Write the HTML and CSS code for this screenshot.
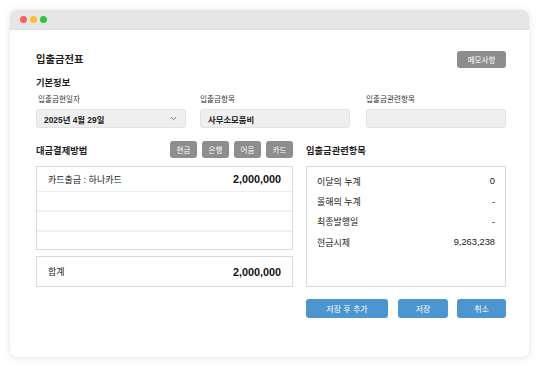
FILE: index.html
```html
<!DOCTYPE html>
<html lang="ko">
<head>
<meta charset="utf-8">
<link rel="stylesheet" href="styles.css">
</head>
<body>
<div class="window">
  <div class="titlebar">
    <span class="dot red"></span><span class="dot yellow"></span><span class="dot green"></span>
  </div>
  <div class="content">
    <div class="head">
      <h1 class="title">입출금전표</h1>
      <button class="btn gray memo">메모사항</button>
    </div>
    <h2 class="section">기본정보</h2>
    <div class="fields">
      <div class="field f1">
        <label class="label">입출금현일자</label>
        <div class="input select"><span>2025년 4월 29일</span>
          <svg class="chev" width="7" height="5" viewBox="0 0 7 5"><path d="M1 1.2 L3.5 3.6 L6 1.2" fill="none" stroke="#666" stroke-width="0.9"/></svg>
        </div>
      </div>
      <div class="field f2">
        <label class="label">입출금항목</label>
        <div class="input"><span>사무소모품비</span></div>
      </div>
      <div class="field f3">
        <label class="label">입출금관련항목</label>
        <div class="input"></div>
      </div>
    </div>
    <div class="lower">
      <div class="left">
        <div class="sub-head">
          <h2 class="section">대금결제방법</h2>
          <div class="paybtns">
            <button class="btn gray small">현금</button>
            <button class="btn gray small">은행</button>
            <button class="btn gray small">어음</button>
            <button class="btn gray small">카드</button>
          </div>
        </div>
        <div class="table">
          <div class="row first"><span>카드출금 : 하나카드</span><b class="num">2,000,000</b></div>
          <div class="row"></div>
          <div class="row"></div>
          <div class="row last"></div>
        </div>
        <div class="sum"><span>합계</span><b class="num">2,000,000</b></div>
      </div>
      <div class="right">
        <div class="sub-head">
          <h2 class="section">입출금관련항목</h2>
        </div>
        <div class="info">
          <div class="irow"><span>이달의 누계</span><span class="num">0</span></div>
          <div class="irow"><span>올해의 누계</span><span class="num">-</span></div>
          <div class="irow"><span>최종발행일</span><span class="num">-</span></div>
          <div class="irow"><span>현금시제</span><span class="num">9,263,238</span></div>
        </div>
        <div class="actions">
          <button class="btn blue wide">저장 후 추가</button>
          <button class="btn blue mid">저장</button>
          <button class="btn blue mid2">취소</button>
        </div>
      </div>
    </div>
  </div>
</div>
</body>
</html>
```

FILE: styles.css
```css
* { box-sizing: border-box; margin: 0; padding: 0; }
html, body { background: #ffffff; }
body {
  font-family: "Liberation Sans", "Noto Sans CJK KR", sans-serif;
  color: #222;
  padding: 10px 11px 0 10px;
  width: 540px;
  height: 368px;
  overflow: hidden;
}
.window {
  width: 519px;
  height: 347px;
  background: #fff;
  border-radius: 7px;
  box-shadow: 0 1px 8px rgba(0,0,0,0.10), 0 0 2px rgba(0,0,0,0.06);
  overflow: hidden;
}
.titlebar {
  height: 20px;
  background: #e6e6e6;
  display: flex;
  align-items: center;
  padding-left: 10px;
  gap: 3px;
  border-bottom: 1px solid #e0e0e0;
}
.dot { width: 7px; height: 7px; border-radius: 50%; display: block; }
.red { background: #fe5f57; }
.yellow { background: #febc2e; }
.green { background: #28c840; }
.content { padding: 21px 23px 0 26px; }
.head {
  display: flex;
  justify-content: space-between;
  align-items: center;
  height: 17px;
}
.title { font-size: 10.3px; font-weight: bold; color: #1e1e1e; margin-top: -2px; }
.btn {
  font-family: "Noto Sans CJK KR", "Liberation Sans", sans-serif;
  border: none;
  color: #fff;
  font-size: 7.5px;
  border-radius: 3px;
  display: flex;
  align-items: center;
  justify-content: center;
}
.gray { background: #8d8d8d; }
.memo { width: 49px; height: 17px; margin-right: 0; }
.section { font-size: 9.3px; font-weight: bold; color: #1e1e1e; }
.content > .section { margin-top: 8px; line-height: 14px; }
.fields { display: flex; margin-top: 5px; }
.field { display: flex; flex-direction: column; }
.f1 { width: 150px; }
.f2 { width: 150px; margin-left: 14px; }
.f3 { width: 140px; margin-left: 16px; }
.label { font-size: 7.6px; color: #333; line-height: 10px; padding-left: 2px; margin-bottom: 4px; }
.f2 .label, .f3 .label { padding-left: 0; }
.input {
  height: 19px;
  background: #efefef;
  border: 1px solid #e3e3e3;
  border-radius: 3px;
  display: flex;
  align-items: center;
  padding: 0 7px;
  font-size: 8.4px;
  font-weight: bold;
  color: #222;
  justify-content: space-between;
}
.chev { margin-right: 1px; }
.lower { display: flex; margin-top: 13px; }
.left { width: 257px; }
.right { width: 200px; margin-left: 13px; }
.sub-head { display: flex; justify-content: space-between; align-items: center; height: 17px; }
.paybtns { display: flex; gap: 5px; }
.small { width: 27px; height: 17px; }
.table {
  margin-top: 8px;
  border: 1px solid #d9d9d9;
  height: 84px;
  display: flex;
  flex-direction: column;
}
.row {
  flex: none;
  height: 20px;
  border-bottom: 2px solid #f1f1f1;
  display: flex;
  justify-content: space-between;
  align-items: center;
  padding: 0 11px;
  font-size: 9px;
}
.row.first { height: 25px; border-bottom: 1px solid #ececec; }
.row.last { border-bottom: none; height: 18px; }
.num { font-family: "Liberation Sans", "Noto Sans CJK KR", sans-serif; }
b.num { font-size: 10.8px; font-weight: bold; color: #111; }
.sum {
  margin-top: 6px;
  height: 31px;
  border: 1px solid #d9d9d9;
  display: flex;
  justify-content: space-between;
  align-items: center;
  padding: 0 11px;
  font-size: 9px;
}
.info {
  margin-top: 8px;
  border: 1px solid #d9d9d9;
  height: 121px;
  padding: 4px 10px 0 10px;
}
.irow {
  display: flex;
  justify-content: space-between;
  align-items: center;
  height: 20.4px;
  font-size: 9px;
  color: #222;
}
.irow .num { font-size: 9.3px; }
.actions { display: flex; margin-top: 12px; }
.blue { background: #4b96d1; height: 19px; font-size: 8px; }
.wide { width: 82px; }
.mid { width: 50px; margin-left: 10px; }
.mid2 { width: 49px; margin-left: 9px; }
```
